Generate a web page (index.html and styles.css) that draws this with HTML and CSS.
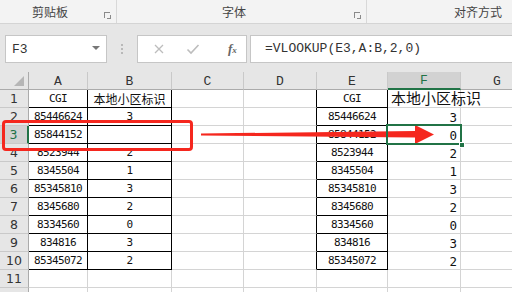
FILE: index.html
```html
<!DOCTYPE html>
<html>
<head>
<meta charset="utf-8">
<link rel="stylesheet" href="styles.css">
</head>
<body>
<div class="page">
  <div class="ribbon">
    <div class="group g1"><span class="glabel">剪贴板</span><span class="launch"></span></div>
    <div class="group g2"><span class="glabel">字体</span><span class="launch"></span></div>
    <div class="group g3"><span class="glabel">对齐方式</span></div>
  </div>
  <div class="fbar">
    <div class="namebox"><span class="nbtext">F3</span><span class="caret"></span></div>
    <div class="dots"><i></i><i></i><i></i></div>
    <div class="fbtns">
      <svg class="ico" width="12" height="12" viewBox="0 0 12 12"><path d="M2 2 L10 10 M10 2 L2 10" stroke="#bdbdbd" stroke-width="1.3" fill="none"/></svg>
      <svg class="ico" width="14" height="12" viewBox="0 0 14 12"><path d="M1.5 6.5 L5 10 L12.5 2" stroke="#bdbdbd" stroke-width="1.6" fill="none"/></svg>
      <span class="fx">f<sub>x</sub></span>
    </div>
    <div class="finput">=VLOOKUP(E3,A:B,2,0)</div>
  </div>
  <div class="sheet">
    <div class="hd corner"><span class="tri"></span></div>
    <div class="hd">A</div><div class="hd">B</div><div class="hd">C</div><div class="hd">D</div><div class="hd">E</div><div class="hd hsel">F</div><div class="hd">G</div>

    <div class="rh">1</div><div class="c t">CGI</div><div class="c t cj">本地小区标识</div><div class="c"></div><div class="c lb"></div><div class="c t">CGI</div><div class="c f1"><span class="ovf">本地小区标识</span></div><div class="c"></div>
    <div class="rh">2</div><div class="c t">85446624</div><div class="c t">3</div><div class="c"></div><div class="c lb"></div><div class="c t">85446624</div><div class="c r">3</div><div class="c"></div>
    <div class="rh rsel">3</div><div class="c t">85844152</div><div class="c t"></div><div class="c"></div><div class="c lb"></div><div class="c t">85844152</div><div class="c r">0</div><div class="c"></div>
    <div class="rh">4</div><div class="c t">8523944</div><div class="c t">2</div><div class="c"></div><div class="c lb"></div><div class="c t">8523944</div><div class="c r">2</div><div class="c"></div>
    <div class="rh">5</div><div class="c t">8345504</div><div class="c t">1</div><div class="c"></div><div class="c lb"></div><div class="c t">8345504</div><div class="c r">1</div><div class="c"></div>
    <div class="rh">6</div><div class="c t">85345810</div><div class="c t">3</div><div class="c"></div><div class="c lb"></div><div class="c t">85345810</div><div class="c r">3</div><div class="c"></div>
    <div class="rh">7</div><div class="c t">8345680</div><div class="c t">2</div><div class="c"></div><div class="c lb"></div><div class="c t">8345680</div><div class="c r">2</div><div class="c"></div>
    <div class="rh">8</div><div class="c t">8334560</div><div class="c t">0</div><div class="c"></div><div class="c lb"></div><div class="c t">8334560</div><div class="c r">0</div><div class="c"></div>
    <div class="rh">9</div><div class="c t">834816</div><div class="c t">3</div><div class="c"></div><div class="c lb"></div><div class="c t">834816</div><div class="c r">3</div><div class="c"></div>
    <div class="rh">10</div><div class="c t">85345072</div><div class="c t">2</div><div class="c"></div><div class="c lb"></div><div class="c t">85345072</div><div class="c r">2</div><div class="c"></div>
    <div class="rh">11</div><div class="c"></div><div class="c"></div><div class="c"></div><div class="c"></div><div class="c"></div><div class="c"></div><div class="c"></div>
    <div class="rh"></div><div class="c"></div><div class="c"></div><div class="c"></div><div class="c"></div><div class="c"></div><div class="c"></div><div class="c"></div>
  </div>

  <div class="redbox"></div>
  <svg class="arrow" width="240" height="24" viewBox="0 0 240 24">
    <polygon points="0,9.5 214,7 214,1 233,10.5 214,20 214,13.5 0,11.5" fill="#f5271e"/>
  </svg>
  <div class="selbox"><span class="handle"></span></div>
</div>
</body>
</html>
```
FILE: styles.css
```css
* { box-sizing: border-box; }
html, body { margin: 0; padding: 0; }
body { width: 512px; height: 292px; overflow: hidden; background: #fff; }
.page { position: relative; width: 512px; height: 292px; overflow: hidden; }

.ribbon {
  height: 24px;
  background: #f3f3f3;
  border-bottom: 1px solid #d4d4d4;
  display: flex;
  font-family: "Noto Sans CJK SC", sans-serif;
  font-size: 12px;
  color: #444;
}
.group { position: relative; height: 23px; border-right: 1px solid #d8d8d8; }
.g1 { width: 117px; }
.g2 { width: 250px; }
.g3 { flex: 1; border-right: none; }
.glabel { position: absolute; top: 4px; line-height: 16px; }
.g1 .glabel { left: 32px; }
.g2 .glabel { left: 105px; }
.g3 .glabel { left: 87px; }
.launch {
  position: absolute; right: 6px; top: 12px; width: 6px; height: 6px;
  border-left: 1px solid #8a8a8a; border-top: 1px solid #8a8a8a;
}
.launch::after {
  content: ""; position: absolute; right: -1px; bottom: -1px; width: 3px; height: 3px;
  border-right: 1px solid #8a8a8a; border-bottom: 1px solid #8a8a8a;
}

.fbar {
  height: 48px;
  background: #e6e6e6;
  display: flex;
  align-items: flex-start;
  padding: 11px 0 0 5px;
}
.namebox {
  width: 102px; height: 28px; background: #fff; border: 1px solid #c6c6c6;
  display: flex; align-items: center; justify-content: space-between;
  padding: 0 6px 0 6px;
}
.nbtext { font-family: "Liberation Mono", monospace; font-size: 13px; color: #333; }
.caret { width: 0; height: 0; border-left: 4px solid transparent; border-right: 4px solid transparent; border-top: 4px solid #777; margin-bottom: 2px; }
.dots { width: 30px; height: 28px; display: flex; flex-direction: column; align-items: center; justify-content: center; gap: 2px; }
.dots i { width: 2px; height: 2px; background: #b9b9b9; display: block; }
.fbtns {
  width: 110px; height: 28px; background: #fff; border: 1px solid #c6c6c6;
  display: flex; align-items: center; padding-left: 15px; gap: 21px;
}
.fx { font-family: "Liberation Serif", serif; font-style: italic; font-size: 13px; color: #666; font-weight: bold; margin-left: 7px; }
.fx sub { font-size: 9px; vertical-align: baseline; font-weight: bold; }
.finput {
  flex: 1; height: 28px; margin-left: 3px; background: #fff; border: 1px solid #c6c6c6; border-right: none;
  font-family: "Liberation Mono", monospace; font-size: 13px; color: #333;
  padding-left: 14px; line-height: 26px;
}

.sheet {
  display: grid;
  grid-template-columns: 29px 59px 84px 72px 73px 71px 73px 73px;
  grid-auto-rows: 18px;
}
.hd {
  background: #e6e6e6;
  border-right: 1px solid #c9c9c9;
  border-bottom: 1px solid #ababab;
  font-family: "Liberation Mono", monospace;
  font-size: 13px; color: #333;
  display: flex; align-items: center; justify-content: center;
  padding-top: 1px;
}
.corner { position: relative; border-right: 1px solid #ababab; }
.tri { position: absolute; right: 4px; bottom: 3px; width: 0; height: 0; border-left: 10px solid transparent; border-bottom: 10px solid #b6b6b6; }
.hsel { background: #d2d2d2; color: #217346; border-bottom: 2px solid #217346; }
.rh {
  background: #e6e6e6;
  border-right: 1px solid #ababab;
  border-bottom: 1px solid #c9c9c9;
  font-family: "DejaVu Sans", sans-serif; font-size: 12.5px; color: #333;
  display: flex; align-items: center; justify-content: center;
}
.rsel { background: #d2d2d2; color: #217346; border-right: 2px solid #217346; }
.c {
  border-right: 1px solid #d4d4d4;
  border-bottom: 1px solid #d4d4d4;
  font-family: "DejaVu Sans Mono", monospace; font-size: 11px; letter-spacing: -0.6px; color: #111;
  display: flex; align-items: center;
  white-space: nowrap;
}
.t { border-right-color: #000; border-bottom-color: #000; justify-content: center; }
.lb { border-right-color: #000; }
.cj { font-family: "Noto Sans CJK SC", sans-serif; font-size: 12px; letter-spacing: 0; }
.r { justify-content: flex-end; padding-right: 3px; font-size: 12.5px; letter-spacing: 0; padding-top: 2px; }
.f1 { position: relative; overflow: visible; }
.ovf { position: absolute; left: 3px; top: -1px; font-family: "Noto Sans CJK SC", sans-serif; font-size: 15px; letter-spacing: 0; line-height: 18px; color: #111; }

.redbox {
  position: absolute; left: 2px; top: 120px; width: 191px; height: 31px;
  border: 3px solid #f5271e; border-radius: 4px;
}
.arrow { position: absolute; left: 201px; top: 124px; }
.selbox {
  position: absolute; left: 386px; top: 124px; width: 76px; height: 21px;
  border: 2px solid #217346;
}
.handle {
  position: absolute; right: -5px; bottom: -5px; width: 6px; height: 6px;
  background: #217346; border: 1px solid #fff;
}
```
